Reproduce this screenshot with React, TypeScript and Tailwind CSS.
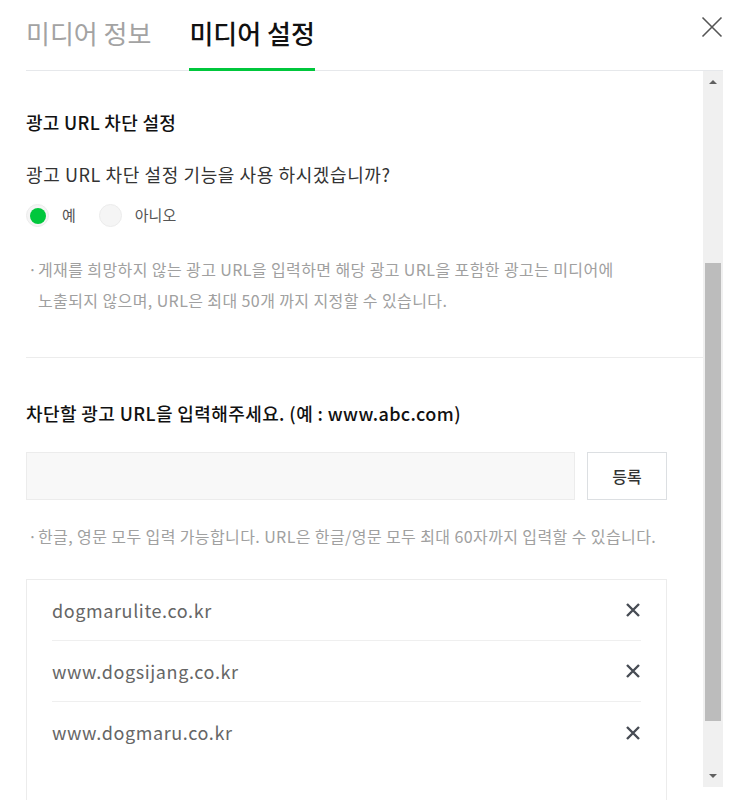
import React from "react";

const blockedUrls = ["dogmarulite.co.kr", "www.dogsijang.co.kr", "www.dogmaru.co.kr"];

const font = "font-['Noto_Sans_CJK_KR','Noto_Sans',sans-serif]";

function CloseIcon() {
  return (
    <svg width="22" height="22" viewBox="0 0 22 22" fill="none">
      <path d="M1.5 1.5 L20.5 20.5 M20.5 1.5 L1.5 20.5" stroke="#555" strokeWidth="1.6" />
    </svg>
  );
}

function RemoveIcon() {
  return (
    <svg width="16" height="16" viewBox="0 0 16 16" fill="none">
      <path d="M2 2 L14 14 M14 2 L2 14" stroke="#474c54" strokeWidth="2.4" />
    </svg>
  );
}

function Radio({ checked, label }: { checked?: boolean; label: string }) {
  return (
    <label className="flex items-center">
      <span className="w-[23px] h-[23px] rounded-full bg-[#f5f5f5] border border-[#ececec] flex items-center justify-center">
        {checked && <span className="w-[16px] h-[16px] rounded-full bg-[#00c73c]" />}
      </span>
      <span className="ml-[13px] text-[15px] text-[#555]">{label}</span>
    </label>
  );
}

export default function App() {
  return (
    <div className={`w-[743px] h-[800px] bg-white overflow-hidden flex flex-col ${font}`}>
      {/* Tabs */}
      <div className="ml-[26px] mr-[20px] h-[71px] shrink-0 border-b border-[#e6e8eb] flex">
        <div className="h-full flex items-center pb-[5px] text-[26px] text-[#a3a3a3]">
          미디어 정보
        </div>
        <div className="relative h-full flex items-center pb-[5px] ml-[38px] text-[26px] font-medium text-[#111]">
          미디어 설정
          <span className="absolute left-0 right-0 bottom-[-1px] h-[3px] bg-[#00c73c]" />
        </div>
        <button className="ml-auto mt-[16px] self-start">
          <CloseIcon />
        </button>
      </div>

      <div className="flex flex-1 min-h-0">
        {/* Content */}
        <div className="flex-1 min-w-0 pl-[26px] overflow-hidden">
          <div className="pt-[39px] pb-[41px] border-b border-[#ececec]">
            <h2 className="text-[18px] leading-[24px] font-medium text-[#111] tracking-[0.3px]">
              광고 URL 차단 설정
            </h2>
            <p className="mt-[28px] text-[18px] leading-[24px] text-[#333] tracking-[0.6px]">
              광고 URL 차단 설정 기능을 사용 하시겠습니까?
            </p>
            <div className="mt-[18px] flex items-center gap-[23px]">
              <Radio checked label="예" />
              <Radio label="아니오" />
            </div>
            <p className="mt-[27px] flex text-[16px] leading-[31px] text-[#a0a0a0] tracking-[0.4px]">
              <span className="w-[12px] pl-[2px] shrink-0">·</span>
              <span>
                게재를 희망하지 않는 광고 URL을 입력하면 해당 광고 URL을 포함한 광고는 미디어에
                <br />
                노출되지 않으며, URL은 최대 50개 까지 지정할 수 있습니다.
              </span>
            </p>
          </div>

          <div className="w-[641px]">
            <h2 className="mt-[43px] text-[18px] leading-[24px] font-medium text-[#111] tracking-[0.4px]">
              차단할 광고 URL을 입력해주세요. (예 : www.abc.com)
            </h2>
            <div className="mt-[27px] flex gap-[12px]">
              <input
                type="text"
                className="flex-1 h-[48px] bg-[#f8f8f8] border border-[#ececec] outline-none px-3"
              />
              <button className="w-[80px] h-[48px] bg-white border border-[#dcdfe2] text-[16px] font-medium text-[#333]">
                등록
              </button>
            </div>
            <p className="mt-[24px] flex text-[16px] leading-[24px] text-[#a0a0a0] tracking-[0.4px]">
              <span className="w-[12px] pl-[2px] shrink-0">·</span>
              <span>한글, 영문 모두 입력 가능합니다. URL은 한글/영문 모두 최대 60자까지 입력할 수 있습니다.</span>
            </p>
            <ul className="mt-[31px] border border-[#ececec] px-[25px] pb-[60px]">
              {blockedUrls.map((url) => (
                <li
                  key={url}
                  className="h-[61px] flex items-center justify-between border-b border-[#efefef] last:border-b-0 text-[18px] text-[#666] tracking-[0.6px]"
                >
                  <span>{url}</span>
                  <RemoveIcon />
                </li>
              ))}
            </ul>
          </div>
        </div>

        {/* Scrollbar */}
        <div className="w-[20px] mr-[20px] mb-[13px] bg-[#f0f0f0] flex flex-col items-center">
          <div className="h-[22px] w-full flex items-center justify-center">
            <span className="w-0 h-0 border-x-[4px] border-x-transparent border-b-[4px] border-b-[#606060]" />
          </div>
          <div className="mt-[170px] w-[16px] h-[458px] bg-[#bcbcbc]" />
          <div className="mt-auto h-[22px] w-full flex items-center justify-center">
            <span className="w-0 h-0 border-x-[4px] border-x-transparent border-t-[4px] border-t-[#606060]" />
          </div>
        </div>
      </div>
    </div>
  );
}
